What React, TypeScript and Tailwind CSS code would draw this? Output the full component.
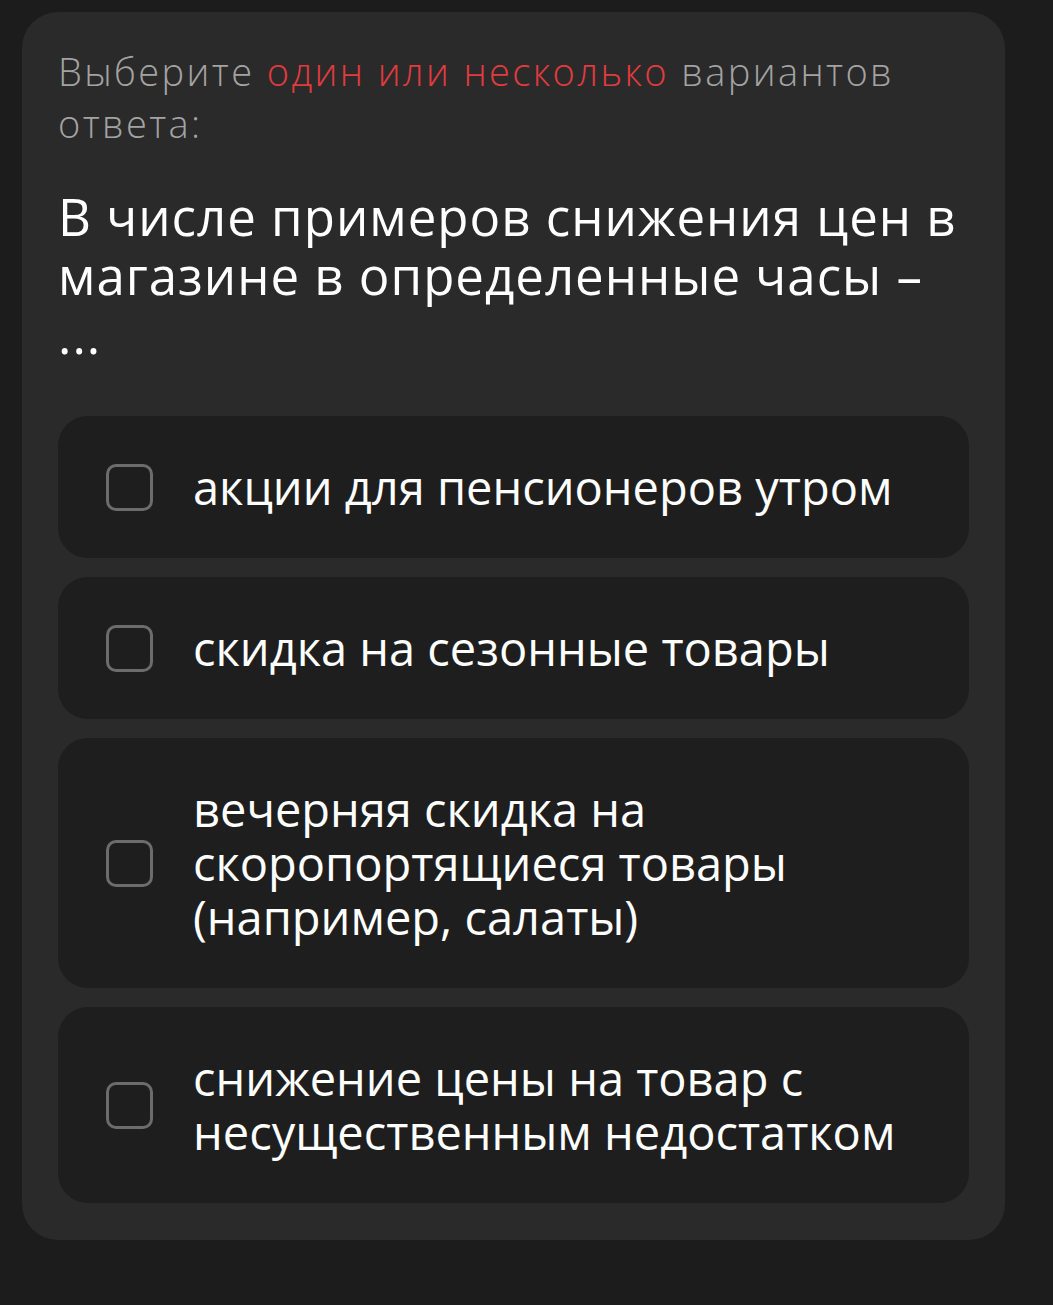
const options = [
  'акции для пенсионеров утром',
  'скидка на сезонные товары',
  'вечерняя скидка на скоропортящиеся товары (например, салаты)',
  'снижение цены на товар с несущественным недостатком',
]

const OptionRow = ({ label }: { label: string }) => (
  <label className="flex items-center gap-[40px] rounded-[30px] bg-[#1e1e1e] py-[44px] pl-[48px] pr-[36px]">
    <span className="h-[47px] w-[47px] shrink-0 rounded-[10px] border-[3px] border-[#6c6c6c]" />
    <span className="text-[47px] leading-[54px] text-white">{label}</span>
  </label>
)

export default function App() {
  return (
    <div
      className="min-h-[1305px] w-full bg-[#1c1c1c] pl-[22px] pr-[48px] pt-[12px]"
      style={{ fontFamily: '"Open Sans", "Noto Sans", sans-serif' }}
    >
      <div className="rounded-[36px] bg-[#2a2a2a] px-[36px] pb-[37px] pt-[33px]">
        <p className="text-[38px] font-light leading-[52px] tracking-[2.4px] text-[#a3a3a3]">
          Выберите <span className="text-[#e23b3f]">один или несколько</span> вариантов ответа:
        </p>

        <h2 className="mt-[38px] text-[51px] leading-[59px] tracking-[1px] text-white">
          В числе примеров снижения цен в магазине в определенные часы –
          <br />
          ...
        </h2>

        <div className="mt-[52px] flex flex-col gap-[19px]">
          {options.map((o) => (
            <OptionRow key={o} label={o} />
          ))}
        </div>
      </div>
    </div>
  )
}
